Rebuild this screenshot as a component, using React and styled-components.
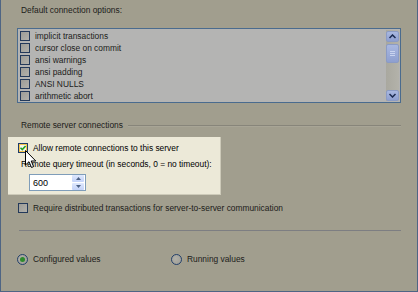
import styled, { createGlobalStyle } from "styled-components";

const Global = createGlobalStyle`
  html, body { margin: 0; padding: 0; background: #a19e8e; }
  body { font-family: "Liberation Sans", Arial, sans-serif; font-size: 8.4px; color: #1c1c1a; }
`;

const options = [
  "implicit transactions",
  "cursor close on commit",
  "ansi warnings",
  "ansi padding",
  "ANSI NULLS",
  "arithmetic abort",
];

const Dialog = styled.div`
  position: relative;
  width: 418px;
  height: 292px;
  box-sizing: border-box;
  background: #a19e8e;
  border-left: 1px solid #4e6584;
  border-right: 1px solid #4e6584;
  border-bottom: 1px solid #4e6584;
  display: flex;
  flex-direction: column;
  overflow: hidden;
`;

const Label = styled.div`
  height: 12px;
  line-height: 12px;
  white-space: nowrap;
  margin-left: ${(p) => p.$left || 20}px;
  margin-top: ${(p) => p.$top || 0}px;
`;

const ListBox = styled.div`
  margin: 12px 0 0 16px;
  width: 384px;
  height: 75px;
  box-sizing: border-box;
  border: 1px solid #4a6b8e;
  background: #b4b4b3;
  display: flex;
`;

const ListItems = styled.div`
  flex: 1;
  padding-top: 1px;
`;

const ListRow = styled.div`
  height: 12px;
  display: flex;
  align-items: center;
  padding-left: 2px;
  gap: 5px;
  white-space: nowrap;
`;

const Box = styled.span`
  display: inline-block;
  width: 10px;
  height: 10px;
  box-sizing: border-box;
  border: 1px solid #23395a;
  background: linear-gradient(135deg, #9d9c96, #b2b1ab);
  flex-shrink: 0;
  position: relative;
`;

const CheckedBox = styled(Box)`
  border-color: #1f3c6a;
  background: #f6f5ee;
  box-shadow: inset 0 0 0 1px #f7c64e;
`;

const ScrollBar = styled.div`
  width: 13px;
  margin: 1px 1px 1px 0;
  background: linear-gradient(90deg, #a9a89f, #b3b2aa);
  display: flex;
  flex-direction: column;
`;

const ScrollBtn = styled.div`
  height: 11px;
  box-sizing: border-box;
  border: 1px solid #8b9bc5;
  border-radius: 2px;
  background: linear-gradient(180deg, #a9b8e0, #8e9fd0);
  display: flex;
  align-items: center;
  justify-content: center;
  margin-top: ${(p) => p.$mt || 0}px;
`;

const Thumb = styled(ScrollBtn)`
  height: 19px;
  margin-top: 2px;
`;

const Filler = styled.div`
  flex: 1;
`;

const GroupHeader = styled.div`
  margin: 16px 0 0 20px;
  width: 380px;
  height: 12px;
  display: flex;
  align-items: center;
  gap: 5px;
  white-space: nowrap;
`;

const HeaderLine = styled.div`
  flex: 1;
  height: 1px;
  background: #87857a;
  box-shadow: 0 1px 0 #a8a596;
`;

const Spotlight = styled.div`
  margin: 6px 0 0 7px;
  width: 213px;
  height: 58px;
  box-sizing: border-box;
  background: #ece9d8;
  border-right: 1px solid #cdcab9;
  border-bottom: 1px solid #cdcab9;
  padding: 5px 0 0 10px;
  display: flex;
  flex-direction: column;
  color: #000;
`;

const CheckRow = styled.div`
  height: 12px;
  display: flex;
  align-items: center;
  gap: 5px;
  white-space: nowrap;
  margin-left: ${(p) => p.$left || 0}px;
  margin-top: ${(p) => p.$top || 0}px;
`;

const Spin = styled.div`
  margin: 4px 0 0 11px;
  width: 57px;
  height: 17px;
  box-sizing: border-box;
  border: 1px solid #7f9db9;
  background: #fff;
  display: flex;
  align-items: center;
  padding-left: 3px;
  font-size: 9px;
`;

const SpinValue = styled.span`
  flex: 1;
`;

const SpinButtons = styled.div`
  width: 12px;
  height: 15px;
  display: flex;
  flex-direction: column;
  gap: 1px;
  margin-right: 1px;
`;

const SpinBtn = styled.div`
  flex: 1;
  background: linear-gradient(180deg, #dfe8fd, #c3d2f8);
  border-radius: 1px;
  display: flex;
  align-items: center;
  justify-content: center;
`;

const Separator = styled.div`
  margin: 16px 0 0 18px;
  width: 382px;
  height: 1px;
  background: #7d7e82;
`;

const RadioRow = styled.div`
  margin: 22px 0 0 16px;
  height: 12px;
  display: flex;
  align-items: center;
`;

const RadioItem = styled.div`
  display: flex;
  align-items: center;
  gap: 5px;
  width: ${(p) => p.$w}px;
  white-space: nowrap;
`;

const Radio = styled.span`
  width: 11px;
  height: 11px;
  box-sizing: border-box;
  border-radius: 50%;
  border: 1px solid #23406b;
  background: radial-gradient(circle at 40% 40%, #b1b0a8, #9c9b94);
  display: flex;
  align-items: center;
  justify-content: center;
  &::after {
    content: "";
    display: ${(p) => (p.$on ? "block" : "none")};
    width: 5px;
    height: 5px;
    border-radius: 50%;
    background: #2e8a2c;
  }
`;

const Cursor = styled.svg`
  position: absolute;
  left: 24px;
  top: 150px;
`;

const Tick = styled.svg`
  position: absolute;
  left: 0;
  top: 0;
`;

const Arrow = ({ down }) => (
  <svg width="7" height="5" viewBox="0 0 7 5">
    <path
      d={down ? "M0.5 1 L3.5 4 L6.5 1" : "M0.5 4 L3.5 1 L6.5 4"}
      fill="none"
      stroke="#1b2a50"
      strokeWidth="1.5"
    />
  </svg>
);

const SmallArrow = ({ down }) => (
  <svg width="5" height="3" viewBox="0 0 5 3">
    <path d={down ? "M0 0 L5 0 L2.5 3 Z" : "M0 3 L5 3 L2.5 0 Z"} fill="#4d6185" />
  </svg>
);

export default function App() {
  return (
    <>
      <Global />
      <Dialog>
        <Label $top={4}>Default connection options:</Label>
        <ListBox>
          <ListItems>
            {options.map((o) => (
              <ListRow key={o}>
                <Box />
                {o}
              </ListRow>
            ))}
          </ListItems>
          <ScrollBar>
            <ScrollBtn $mt={1}>
              <Arrow />
            </ScrollBtn>
            <Thumb>
              <svg width="5" height="6" viewBox="0 0 5 6">
                <path d="M0 0.5 H5 M0 2.5 H5 M0 4.5 H5" stroke="#c9d3ef" strokeWidth="1" />
              </svg>
            </Thumb>
            <Filler />
            <ScrollBtn>
              <Arrow down />
            </ScrollBtn>
          </ScrollBar>
        </ListBox>

        <GroupHeader>
          Remote server connections
          <HeaderLine />
        </GroupHeader>

        <Spotlight>
          <CheckRow>
            <CheckedBox>
              <Tick width="8" height="8" viewBox="0 0 8 8">
                <path d="M1.5 3.8 L3.3 5.6 L6.6 2" fill="none" stroke="#21a121" strokeWidth="1.6" />
              </Tick>
            </CheckedBox>
            Allow remote connections to this server
          </CheckRow>
          <Label $left={3} $top={4}>
            Remote query timeout (in seconds, 0 = no timeout):
          </Label>
          <Spin>
            <SpinValue>600</SpinValue>
            <SpinButtons>
              <SpinBtn>
                <SmallArrow />
              </SpinBtn>
              <SpinBtn>
                <SmallArrow down />
              </SpinBtn>
            </SpinButtons>
          </Spin>
        </Spotlight>

        <CheckRow $left={17} $top={7}>
          <Box />
          Require distributed transactions for server-to-server communication
        </CheckRow>

        <Separator />

        <RadioRow>
          <RadioItem $w={154}>
            <Radio $on />
            Configured values
          </RadioItem>
          <RadioItem $w={120}>
            <Radio />
            Running values
          </RadioItem>
        </RadioRow>

        <Cursor width="12" height="19" viewBox="0 0 12 19">
          <path
            d="M0.5 0.5 L0.5 15 L4 11.7 L6.5 17.5 L8.6 16.6 L6.2 11 L10.8 11 Z"
            fill="#fff"
            stroke="#000"
            strokeWidth="1"
            strokeLinejoin="round"
          />
        </Cursor>
      </Dialog>
    </>
  );
}
